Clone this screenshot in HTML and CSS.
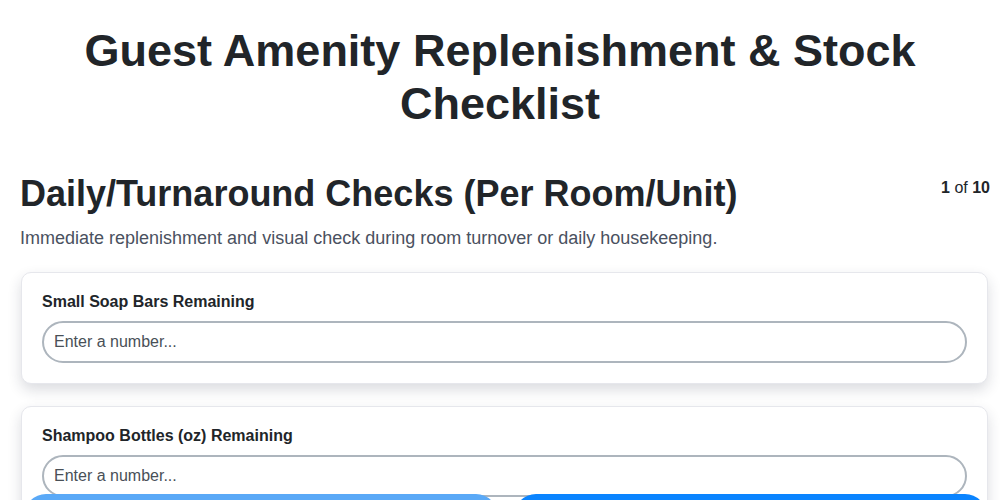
FILE: index.html
```html
<!DOCTYPE html>
<html lang="en">
<head>
<meta charset="utf-8">
<title>Guest Amenity Replenishment &amp; Stock Checklist</title>
<link rel="stylesheet" href="styles.css">
</head>
<body>
<main class="page">
  <h1 class="title">Guest Amenity Replenishment &amp; Stock Checklist</h1>
  <section class="section">
    <div class="section-head">
      <h2 class="section-title">Daily/Turnaround Checks (Per Room/Unit)</h2>
      <div class="counter"><b>1</b> of <b>10</b></div>
    </div>
    <p class="section-desc">Immediate replenishment and visual check during room turnover or daily housekeeping.</p>
    <div class="card">
      <label class="field-label" for="f1">Small Soap Bars Remaining</label>
      <input class="field-input" id="f1" type="text" placeholder="Enter a number...">
    </div>
    <div class="card">
      <label class="field-label" for="f2">Shampoo Bottles (oz) Remaining</label>
      <input class="field-input" id="f2" type="text" placeholder="Enter a number...">
    </div>
  </section>
</main>
<nav class="nav-bar">
  <button class="btn btn-prev" type="button">Previous</button>
  <button class="btn btn-next" type="button">Next</button>
</nav>
</body>
</html>
```
FILE: styles.css
```css
* { box-sizing: border-box; }
html, body { margin: 0; padding: 0; background: #fff; }
body {
  font-family: "Liberation Sans", Arial, sans-serif;
  color: #212529;
  overflow: hidden;
}
.page { padding: 0 10px 0 20px; }
.title {
  margin: 24px 0 0;
  text-align: center;
  font-size: 45px;
  line-height: 53px;
  font-weight: 700;
  padding: 0 45px 0 35px;
}
.section { margin-top: 43px; }
.section-head {
  display: flex;
  justify-content: space-between;
  align-items: flex-start;
}
.section-title {
  margin: 0;
  font-size: 36px;
  line-height: 42px;
  font-weight: 700;
}
.counter {
  font-size: 16px;
  line-height: 20px;
  margin-top: 5px;
  color: #212529;
}
.counter b { font-weight: 700; }
.section-desc {
  margin: 11px 0 22px;
  font-size: 18px;
  line-height: 24px;
  color: #4a5160;
}
.card {
  margin-left: 1px;
  margin-right: 2px;
  background: #fff;
  border: 1px solid #e6e7ec;
  border-radius: 10px;
  box-shadow: 0 6px 14px rgba(30, 35, 60, 0.16);
  padding: 19px 20px 20px;
  margin-bottom: 22px;
}
.field-label {
  display: block;
  font-size: 16px;
  line-height: 20px;
  font-weight: 700;
  margin-bottom: 9px;
}
.field-input {
  display: block;
  width: 100%;
  height: 42px;
  border: 2px solid #adb5bd;
  border-radius: 21px;
  padding: 0 10px;
  font-family: "Liberation Sans", Arial, sans-serif;
  font-size: 16px;
  color: #212529;
  background: #fff;
  outline: none;
}
.field-input::placeholder { color: #495057; opacity: 1; }
.nav-bar {
  position: fixed;
  left: 0;
  right: 0;
  bottom: -38px;
  display: flex;
  gap: 16px;
  padding: 0 13px 0 24px;
}
.btn {
  flex: 1;
  height: 44px;
  border: none;
  border-radius: 22px;
  color: #fff;
  font-family: "Liberation Sans", Arial, sans-serif;
  font-size: 16px;
  font-weight: 700;
}
.btn-prev { background: #5aa9f7; }
.btn-next { background: #0a84ff; }
```
